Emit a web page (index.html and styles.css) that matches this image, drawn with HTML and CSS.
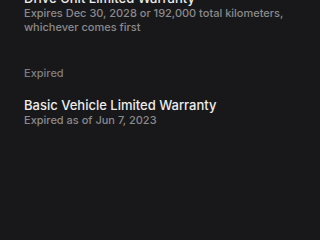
FILE: index.html
```html
<!DOCTYPE html>
<html>
<head>
<meta charset="utf-8">
<link rel="stylesheet" href="styles.css">
</head>
<body>
<div class="page">
  <div class="item first">
    <div class="title">Drive Unit Limited Warranty</div>
    <div class="sub">Expires Dec 30, 2028 or 192,000 total kilometers, whichever comes first</div>
  </div>
  <div class="section">Expired</div>
  <div class="item">
    <div class="title">Basic Vehicle Limited Warranty</div>
    <div class="sub">Expired as of Jun 7, 2023</div>
  </div>
</div>
</body>
</html>
```
FILE: styles.css
```css
html, body {
  margin: 0;
  padding: 0;
  background: #18181a;
  height: 100%;
  overflow: hidden;
}
.page {
  font-family: Inter, "Liberation Sans", sans-serif;
  padding: 0 24px;
  display: flex;
  flex-direction: column;
}
.item.first {
  margin-top: -10px;
}
.title {
  color: #ececec;
  font-size: 13px;
  line-height: 16px;
  font-weight: 500;
}
.sub {
  color: #8a8a8c;
  font-size: 11px;
  line-height: 14px;
  font-weight: 500;
}
.section {
  color: #7e7e80;
  font-size: 11px;
  line-height: 14px;
  font-weight: 500;
  margin-top: 32px;
}
.item + .item, .section + .item {
  margin-top: 17px;
}
```
